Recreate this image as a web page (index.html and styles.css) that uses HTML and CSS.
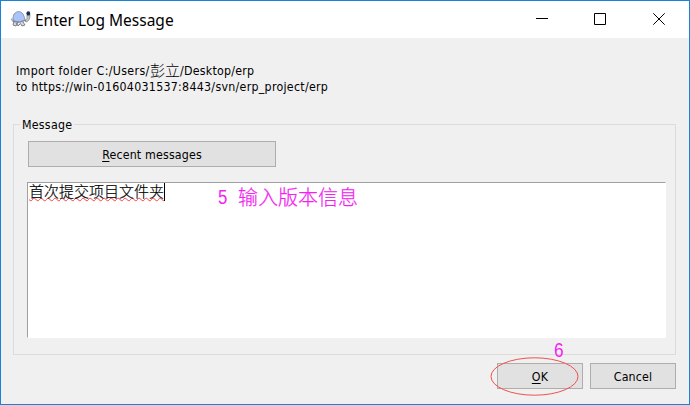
FILE: index.html
```html
<!DOCTYPE html>
<html lang="en">
<head>
<meta charset="utf-8">
<title>Enter Log Message</title>
<link rel="stylesheet" href="styles.css">
</head>
<body>
<div class="window">
  <header class="titlebar">
    <svg class="app-icon" width="22" height="18" viewBox="0 0 22 18">
      <path d="M15 11 Q18 9 17 5 L19 3 L20 5 Q20 11 16 12Z" fill="#c3c6cd" stroke="#777c86" stroke-width=".7"/>
      <path d="M4 11 L3 15 L6 16 L8 12 M13 12 L15 15 L12 16 L10 13 M6 13 L8 16 L10 14" fill="#d9dadd" stroke="#70747c" stroke-width=".9"/>
      <path d="M1 9 L3 9 L5 12 L3 12Z" fill="#c6c9cf" stroke="#8a8d94" stroke-width=".6"/>
      <path d="M4 11 Q2 8 4 4 Q9 -1 13 4 Q15 8 15 10 Q9 13 4 11Z" fill="#a9c4fb" stroke="#8390b0" stroke-width=".9"/>
      <path d="M3 11 Q9 14 16 10" fill="none" stroke="#737b8e"/>
      <ellipse cx="18.3" cy="3.4" rx="1.9" ry="2.2" fill="#12344c"/>
    </svg>
    <h1 class="title">Enter Log Message</h1>
    <div class="controls">
      <svg width="12" height="12" viewBox="0 0 12 12"><path d="M0 5.5H12"/></svg>
      <svg width="12" height="12" viewBox="0 0 12 12"><path d="M.5 .5H11.5V11.5H.5Z"/></svg>
      <svg class="close" width="12" height="12" viewBox="0 0 12 12"><path d="M.3 .3L11.7 11.7M11.7 .3L.3 11.7"/></svg>
    </div>
  </header>
  <main class="body">
    <div class="info">
      <div class="line first"><span class="seg-a">Import folder C:/Users/</span><span class="cjk">彭立</span><span class="seg-b">/Desktop/erp</span></div>
      <div class="line url">to https://win-01604031537:8443/svn/erp_project/erp</div>
    </div>
    <fieldset class="group">
      <legend>Message</legend>
      <button class="btn recent"><span><u>R</u>ecent messages</span></button>
      <div class="editor"><span class="entry">首次提交项目文件夹</span><span class="caret"></span>
        <span class="note note-five"><span class="digit">5</span>输入版本信息</span>
      </div>
    </fieldset>
    <footer class="actions">
      <div class="ok-wrap">
        <button class="btn ok"><span><u>O</u>K</span></button>
        <svg class="ring" width="90" height="40" viewBox="0 0 90 40"><ellipse cx="45.5" cy="20.5" rx="43.5" ry="18.7"/></svg>
        <span class="note note-six">6</span>
      </div>
      <button class="btn cancel"><span>Cancel</span></button>
    </footer>
  </main>
</div>
</body>
</html>
```
FILE: styles.css
```css
* { box-sizing: border-box; }
body { margin: 0; font: 12.3px/16px "DejaVu Sans Condensed", "DejaVu Sans", sans-serif; color: #000; }
.window { width: 690px; height: 405px; border: 1px solid #1883d7; background: #f0f0f0; }
.titlebar { height: 37px; display: flex; align-items: center; background: #fff; padding: 0 24px 0 9px; }
.app-icon { flex: none; margin-top: -1px; }
.title { margin: 0 0 0 3px; font: 15.5px/20px "Noto Sans", sans-serif; white-space: nowrap; }
.controls { margin: -2px 0 0 auto; display: flex; gap: 46px; }
.controls svg { display: block; fill: none; stroke: #000; stroke-width: 1; }
.controls .close { margin-left: 1px; }
.body { padding: 25px 13px 0 12px; }
.info { margin-left: 3px; height: 49px; white-space: nowrap; }
.line { display: flex; height: 16px; }
.seg-a { width: 134px; letter-spacing: .34px; }
.seg-b { letter-spacing: .24px; }
.url { letter-spacing: .28px; }
.cjk { width: 30px; font: 300 15px/13px "Noto Sans CJK SC", sans-serif; }
.group { position: relative; margin: 4px 0 0; padding: 9px 9px 0 14px; height: 239px; border: 1px solid #dcdcdc; min-width: 0; }
.group legend { margin-left: -8px; padding: 1px 2px 0; height: 16px; letter-spacing: .25px; }
.btn { display: flex; align-items: center; justify-content: center; height: 26px; padding: 2px 0 0; border: 1px solid #adadad; border-radius: 0; background: #e1e1e1; font: inherit; color: #000; letter-spacing: .17px; }
.btn u { text-underline-offset: 2px; }
.recent { width: 248px; }
.editor { position: relative; margin: 15px 0 0 -1px; width: 639px; height: 156px; display: flex; align-items: flex-start; padding: 0 1px; border: 1px solid #a0a0a0; border-right-color: #fff; border-bottom-color: #fff; background: #fff; }
.entry { font: 300 15px/16px "Noto Sans CJK SC", sans-serif; -webkit-text-stroke: .2px #000; text-decoration: underline wavy #ff4040 1px; text-underline-offset: 0; white-space: nowrap; }
.caret { width: 1px; height: 18px; background: #000; }
.note { position: absolute; color: #f31ff3; font: 20px/24px "Noto Sans CJK SC", sans-serif; font-weight: 300; -webkit-text-stroke: .25px #f31ff3; white-space: nowrap; }
.note-five { left: 190px; top: 2px; }
.digit { display: inline-block; width: 20px; font-family: "Liberation Sans", sans-serif; font-size: 20px; transform: translateY(-1px) scaleX(.84); transform-origin: left; -webkit-text-stroke: 0; }
.actions { display: flex; justify-content: flex-end; gap: 7px; padding-top: 8px; }
.ok-wrap { position: relative; }
.ok, .cancel { width: 86px; }
.ring { position: absolute; left: -8px; top: -7px; fill: none; stroke: #f05050; stroke-width: 1; }
.note-six { left: 57px; top: -25px; font-family: "Liberation Sans", sans-serif; transform: scaleX(.86); transform-origin: left; -webkit-text-stroke: 0; }
```
